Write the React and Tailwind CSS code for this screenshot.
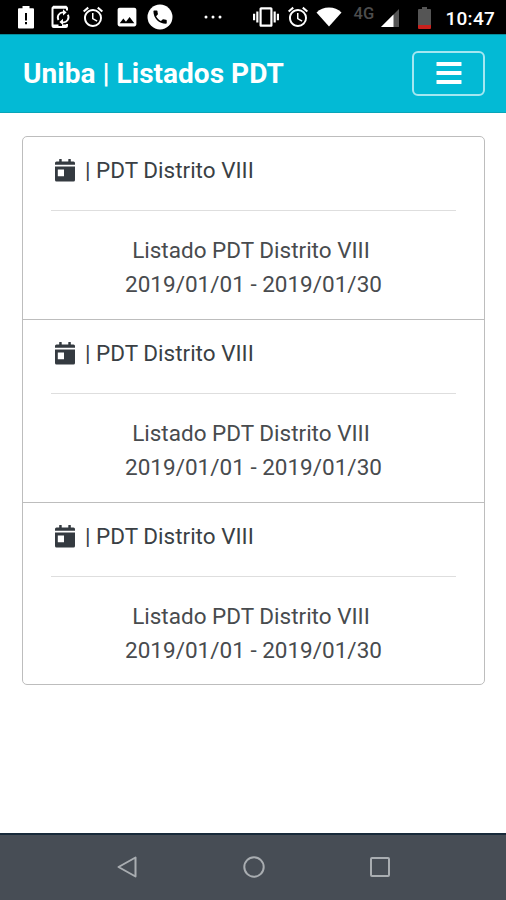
import { MdAlarm, MdImage, MdVibration } from "react-icons/md";

const listados = [
  { id: 1, name: "PDT Distrito VIII", from: "2019/01/01", to: "2019/01/30" },
  { id: 2, name: "PDT Distrito VIII", from: "2019/01/01", to: "2019/01/30" },
  { id: 3, name: "PDT Distrito VIII", from: "2019/01/01", to: "2019/01/30" },
];

const StatusBar = () => {
  return (
    <div className="flex h-[34px] items-center bg-black pl-[13px] text-white">
      <div className="flex items-center gap-[7.6px]">
        <svg className="h-[26px] w-[26px]" viewBox="0 0 26 26" fill="currentColor">
          <path
            fillRule="evenodd"
            d="M9.500 2h7v2.200H20a1 1 0 0 1 1 1V23.500a1 1 0 0 1-1 1H6a1 1 0 0 1-1-1V5.200a1 1 0 0 1 1-1h3.500zM12 9v7.500h2V9zM12 18v2.300h2V18z"
          />
        </svg>
        <svg
          className="h-[26px] w-[26px]"
          viewBox="0 0 26 26"
          fill="none"
          stroke="currentColor"
        >
          <path
            strokeWidth="2"
            d="M20 6.500V4.500A1.500 1.500 0 0 0 18.500 3H7a1.500 1.500 0 0 0-1.500 1.500v17A1.500 1.500 0 0 0 7 23h11.500a1.500 1.500 0 0 0 1.500-1.500V20"
          />
          <path strokeWidth="3" d="M6 3.200h13.500M6 22h5.500M15 22h4.500" />
          <path strokeWidth="1.800" d="M11.500 16a5 5 0 0 1 5-7.500M20.800 10.800a5 5 0 0 1-5 7.500" />
          <path
            fill="currentColor"
            stroke="none"
            d="M16 5.300l3.600 3.200L16 11.600zM16 14.700l-3.600 3.200 3.600 3.100z"
          />
        </svg>
        <MdAlarm className="h-[26px] w-[26px] p-[1px]" />
        <MdImage className="h-[26px] w-[26px] p-[0.5px]" />
        <svg className="h-[26px] w-[26px]" viewBox="0 0 26 26">
          <circle cx="13" cy="13" r="12.500" fill="currentColor" />
          <path
            fill="#000"
            transform="translate(4.200 4.200) scale(.74)"
            d="M6.620 10.790c1.440 2.830 3.760 5.140 6.590 6.590l2.200-2.200c.27-.27.67-.36 1.020-.24 1.120.37 2.330.57 3.570.57.55 0 1 .45 1 1V20c0 .55-.45 1-1 1-9.390 0-17-7.610-17-17 0-.55.45-1 1-1h3.500c.55 0 1 .45 1 1 0 1.250.2 2.450.57 3.570.11.35.03.74-.25 1.020l-2.200 2.200z"
          />
        </svg>
      </div>
      <svg className="ml-[31px] h-1 w-[18px]" viewBox="0 0 18 4" fill="currentColor">
        <circle cx="2" cy="2" r="1.500" />
        <circle cx="9" cy="2" r="1.500" />
        <circle cx="16" cy="2" r="1.500" />
      </svg>
      <MdVibration className="ml-[30.500px] h-[26px] w-[26px]" />
      <MdAlarm className="ml-[7.500px] h-6 w-6" />
      <svg className="ml-[6px] h-5 w-[26px]" viewBox="0 0 26 20" fill="currentColor">
        <path d="M.5 5.500C4 2.200 8 .5 13 .5s9 1.700 12.500 5L13 19.500z" />
      </svg>
      <span className="mb-[5px] ml-[11px] w-[22px] font-['Roboto',sans-serif] text-[16.500px] leading-none font-medium tracking-[0.2px] text-[#4d4d4d]">
        4G
      </span>
      <svg className="mt-px ml-[6px] h-[18px] w-[18px]" viewBox="0 0 18 18">
        <path fill="#555" d="M18 0v18H0z" />
        <path fill="#fff" d="M12.500 5.500V18H0z" />
      </svg>
      <svg className="mt-px ml-[19px] h-[22px] w-[13px]" viewBox="0 0 13 22">
        <path fill="#555" d="M4 0h5v2h3a1 1 0 0 1 1 1v15H0V3a1 1 0 0 1 1-1h3z" />
        <path fill="#c9211d" d="M0 18h13v3a1 1 0 0 1-1 1H1a1 1 0 0 1-1-1z" />
      </svg>
      <span className="mt-[2px] ml-[14px] font-['Roboto',sans-serif] text-[19px] leading-none font-medium tracking-[0.3px]">
        10:47
      </span>
    </div>
  );
};

const Navbar = () => {
  return (
    <header className="flex h-[79px] items-center justify-between border-t border-b border-t-[#078c9b] border-b-[#08a5b8] bg-[#03bad5] pr-[21px] pl-[23px]">
      <h1 className="mt-px text-[28px] leading-none font-bold tracking-[0.03px] text-white">
        Uniba | Listados PDT
      </h1>
      <button className="flex h-[45px] w-[73px] items-center justify-center rounded-[6px] border-2 border-[#a5e7f1]">
        <svg className="mb-px h-[22px] w-[26px]" viewBox="0 0 26 22" fill="#fff">
          <rect x=".5" width="25" height="4" rx=".5" />
          <rect x=".5" y="9" width="25" height="4" rx=".5" />
          <rect x=".5" y="18" width="25" height="4" rx=".5" />
        </svg>
      </button>
    </header>
  );
};

const CalendarIcon = () => {
  return (
    <svg className="mr-[10px] h-[23px] w-[20px]" viewBox="0 0 20 23" fill="#343a40">
      <rect x="4.200" width="2.500" height="4" rx=".5" />
      <rect x="13.300" width="2.500" height="4" rx=".5" />
      <path d="M1.500 2.500h17A1.500 1.500 0 0 1 20 4v1.700H0V4a1.500 1.500 0 0 1 1.500-1.500z" />
      <path
        fillRule="evenodd"
        d="M0 7.500h20V21a1.500 1.500 0 0 1-1.500 1.500h-17A1.500 1.500 0 0 1 0 21zM2.800 10.400v6.800h6.200v-6.800z"
      />
    </svg>
  );
};

const ListadoItem = ({ item }) => {
  return (
    <li className="h-[183px] px-7 text-[22.500px] last:h-[181px]">
      <div className="flex h-[74px] items-center border-b border-[#dedede] pb-[6px] pl-[4px] text-[#3a3f44]">
        <CalendarIcon />
        <span>| {item.name}</span>
      </div>
      <div className="pt-[22px] text-center leading-[34px] text-[#484b4e]">
        <p className="pr-[5px]">Listado {item.name}</p>
        <p>
          {item.from} - {item.to}
        </p>
      </div>
    </li>
  );
};

const AndroidNav = () => {
  return (
    <div className="flex h-[67px] items-center justify-between border-t-2 border-[#182a3a] bg-[#474d55] pr-[114px] pb-[2px] pl-[115px]">
      <svg className="h-6 w-6" viewBox="0 0 24 24" fill="none" stroke="#a9adb1" strokeWidth="2">
        <path strokeLinejoin="round" d="M20.500 2.500v19L3.500 12z" />
      </svg>
      <svg className="h-6 w-6" viewBox="0 0 24 24" fill="none" stroke="#a9adb1" strokeWidth="2">
        <circle cx="12" cy="12" r="9.700" />
      </svg>
      <svg className="h-6 w-6" viewBox="0 0 24 24" fill="none" stroke="#a9adb1" strokeWidth="2">
        <rect x="3" y="3" width="18" height="18" rx="1" />
      </svg>
    </div>
  );
};

const App = () => {
  return (
    <div className="flex h-[900px] w-[506px] flex-col overflow-hidden bg-white font-['Roboto',sans-serif]">
      <StatusBar />
      <Navbar />
      <main className="flex-1 pt-[23px] pr-[21px] pl-[22px]">
        <ul className="divide-y divide-[#bdbdbd] rounded-[5px] border border-[#bdbdbd]">
          {listados.map((item) => (
            <ListadoItem key={item.id} item={item} />
          ))}
        </ul>
      </main>
      <AndroidNav />
    </div>
  );
};

export default App;
